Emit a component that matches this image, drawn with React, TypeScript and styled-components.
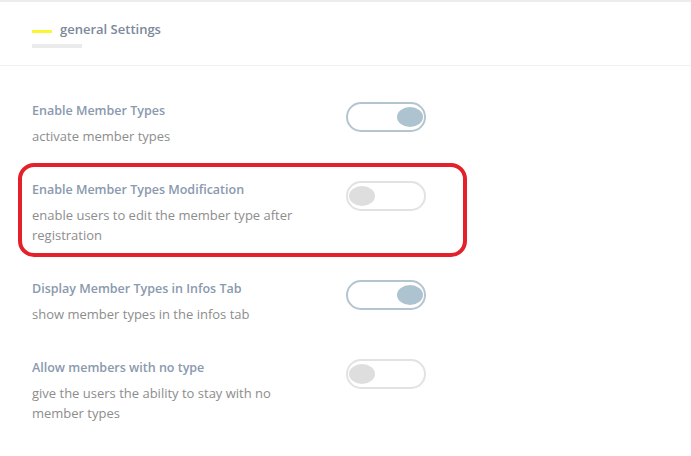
import React, { useState } from "react";
import styled, { createGlobalStyle } from "styled-components";

const GlobalStyle = createGlobalStyle`
  html, body {
    margin: 0;
    padding: 0;
    background: #ffffff;
  }
  body {
    font-family: "Open Sans", "Liberation Sans", sans-serif;
  }
`;

const Page = styled.div`
  width: 691px;
  min-height: 456px;
  border-top: 2px solid #ececec;
  box-sizing: border-box;
  background: #fff;
`;

const Header = styled.header`
  height: 64px;
  box-sizing: border-box;
  padding: 18px 0 0 32px;
  border-bottom: 1px solid #f1f1f1;
`;

const HeaderTitle = styled.div`
  display: flex;
  align-items: center;
  gap: 8px;
`;

const Accent = styled.span`
  width: 20px;
  height: 3px;
  margin-top: 5px;
  background: #faf732;
`;

const HeaderText = styled.h2`
  margin: 0;
  font-size: 13px;
  font-weight: 600;
  line-height: 18px;
  color: #7c889c;
`;

const Underline = styled.div`
  width: 50px;
  height: 4px;
  margin-top: 6px;
  background: #ebebeb;
`;

const List = styled.div`
  display: flex;
  flex-direction: column;
  gap: 35px;
  padding: 36px 0 0 32px;
`;

const Row = styled.div`
  position: relative;
  display: grid;
  grid-template-columns: 314px 80px;
  align-items: start;
`;

/* red annotation frame drawn over the highlighted row */
const Highlight = styled.div`
  position: absolute;
  left: -14px;
  top: -18px;
  width: 449px;
  height: 94px;
  box-sizing: border-box;
  border: 4px solid #e4202a;
  border-radius: 16px;
  pointer-events: none;
`;

const Texts = styled.div`
  width: 292px;
  padding-top: 1px;
`;

const Title = styled.div`
  font-size: 12.5px;
  font-weight: 600;
  line-height: 16px;
  color: #8a99ae;
`;

const Desc = styled.div`
  margin-top: 7px;
  font-size: 13px;
  line-height: 20px;
  color: #8d8d8d;
`;

const Track = styled.button<{ $on: boolean }>`
  display: flex;
  align-items: center;
  justify-content: ${({ $on }) => ($on ? "flex-end" : "flex-start")};
  width: 80px;
  height: 30px;
  padding: 0 1px;
  box-sizing: border-box;
  border: 2px solid ${({ $on }) => ($on ? "#b3c6d0" : "#e2e2e2")};
  border-radius: 15px;
  background: #fff;
  cursor: pointer;
`;

const Knob = styled.span<{ $on: boolean }>`
  width: 26px;
  height: 20px;
  border-radius: 50%;
  background: ${({ $on }) => ($on ? "#adc3cf" : "#dedede")};
`;

interface Setting {
  title: string;
  desc: string;
  on: boolean;
  marked?: boolean;
}

const settings: Setting[] = [
  { title: "Enable Member Types", desc: "activate member types", on: true },
  {
    title: "Enable Member Types Modification",
    desc: "enable users to edit the member type after registration",
    on: false,
    marked: true,
  },
  { title: "Display Member Types in Infos Tab", desc: "show member types in the infos tab", on: true },
  {
    title: "Allow members with no type",
    desc: "give the users the ability to stay with no member types",
    on: false,
  },
];

const Toggle: React.FC<{ initial: boolean }> = ({ initial }) => {
  const [on, setOn] = useState(initial);
  return (
    <Track $on={on} onClick={() => setOn(!on)} aria-pressed={on}>
      <Knob $on={on} />
    </Track>
  );
};

export default function App() {
  return (
    <Page>
      <GlobalStyle />
      <Header>
        <HeaderTitle>
          <Accent />
          <HeaderText>general Settings</HeaderText>
        </HeaderTitle>
        <Underline />
      </Header>
      <List>
        {settings.map((s) => (
          <Row key={s.title}>
            {s.marked && <Highlight />}
            <Texts>
              <Title>{s.title}</Title>
              <Desc>{s.desc}</Desc>
            </Texts>
            <Toggle initial={s.on} />
          </Row>
        ))}
      </List>
    </Page>
  );
}
